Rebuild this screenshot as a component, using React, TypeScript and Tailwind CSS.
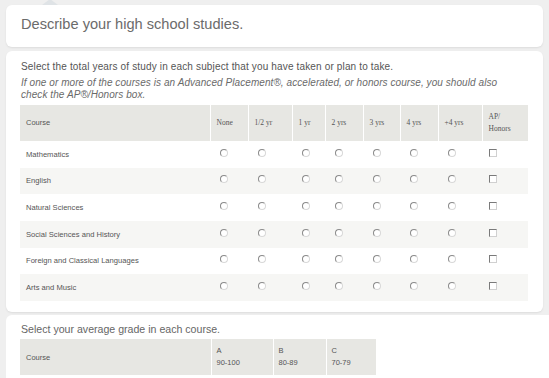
import React from "react";

const years = ["None", "1/2 yr", "1 yr", "2 yrs", "3 yrs", "4 yrs", "+4 yrs"];
const courses = [
  "Mathematics",
  "English",
  "Natural Sciences",
  "Social Sciences and History",
  "Foreign and Classical Languages",
  "Arts and Music",
];
const colWidths = ["w-[190px]", "w-[38px]", "w-[44px]", "w-[33px]", "w-[38px]", "w-[37px]", "w-[38px]", "w-[44px]", "w-[46px]"];

function Radio() {
  return (
    <span className="inline-block w-[8px] h-[8px] rounded-full border border-t-[#8a8a8a] border-l-[#8a8a8a] border-r-[#d8d8d8] border-b-[#d8d8d8] bg-white" />
  );
}

function Checkbox() {
  return (
    <span className="inline-block w-[8px] h-[8px] border border-t-[#7a7a7a] border-l-[#7a7a7a] border-r-[#d0d0d0] border-b-[#d0d0d0] bg-white" />
  );
}

export default function App() {
  return (
    <div className="w-[549px] h-[378px] overflow-hidden bg-[#efefef] font-['Liberation_Sans',sans-serif] text-[#666]">
      {/* intro panel */}
      <div className="relative mt-[5px] ml-[6px] mr-[6px] h-[42px] bg-white rounded-[6px] shadow-[0_1px_2px_rgba(0,0,0,0.08)] px-[15px] pt-[10px]">
        <span className="absolute -top-[6px] left-[36px] w-0 h-0 border-l-[8px] border-l-transparent border-r-[8px] border-r-transparent border-b-[6px] border-b-[#dfe3e6]" />
        <h1 className="text-[14.6px] leading-[18px] text-[#6b6b6b]">Describe your high school studies.</h1>
      </div>

      {/* years of study panel */}
      <div className="mt-[4px] ml-[6px] mr-[6px] bg-white rounded-[6px] shadow-[0_1px_2px_rgba(0,0,0,0.08)] pl-[14px] pr-[15px] pt-[9px] pb-[11px]">
        <p className="pl-[1px] text-[10px] leading-[14px] tracking-[0.15px] text-[#555] whitespace-nowrap">
          Select the total years of study in each subject that you have taken or plan to take.
        </p>
        <p className="pl-[1px] mt-[3px] text-[10px] leading-[12px] italic tracking-[0.07px] text-[#6a6a6a] whitespace-nowrap">
          If one or more of the courses is an Advanced Placement®, accelerated, or honors course, you should also
          <br />
          check the AP®/Honors box.
        </p>
        <table className="mt-[4px] table-fixed border-collapse w-[508px] text-[7.6px] text-[#555]">
          <colgroup>
            {colWidths.map((w, i) => (
              <col key={i} className={w} />
            ))}
          </colgroup>
          <thead>
            <tr className="h-[36px] bg-[#e7e7e3]">
              <th className="text-left font-normal pl-[6px] border-r border-white text-[7.5px]">Course</th>
              {years.map((y) => (
                <th key={y} className="text-left font-normal pl-[6px] border-r border-white font-['Liberation_Serif',serif] text-[7.5px]">
                  {y}
                </th>
              ))}
              <th className="text-left font-normal pl-[6px] leading-[12px] font-['Liberation_Serif',serif] text-[7.5px]">
                AP/
                <br />
                Honors
              </th>
            </tr>
          </thead>
          <tbody>
            {courses.map((c, i) => (
              <tr key={c} className={`h-[26.7px] ${i % 2 === 1 ? "bg-[#f6f6f4]" : "bg-white"}`}>
                <td className="pl-[6px]">{c}</td>
                {years.map((y) => (
                  <td key={y} className="pl-[10px]">
                    <Radio />
                  </td>
                ))}
                <td className="pl-[7px]">
                  <Checkbox />
                </td>
              </tr>
            ))}
          </tbody>
        </table>
      </div>

      {/* grade panel */}
      <div className="mt-[3px] ml-[6px] bg-white rounded-tl-[6px] pl-[14px] pt-[6px] h-[80px]">
        <p className="pl-[1px] text-[10.6px] leading-[16px] text-[#666]">Select your average grade in each course.</p>
        <table className="mt-[2px] table-fixed border-collapse w-[356px] text-[7.5px] text-[#555]">
          <colgroup>
            <col className="w-[191px]" />
            <col className="w-[62px]" />
            <col className="w-[53px]" />
            <col className="w-[50px]" />
          </colgroup>
          <thead>
            <tr className="h-[36px] bg-[#e7e7e3]">
              <th className="text-left font-normal pl-[6px] border-r border-white">Course</th>
              <th className="text-left font-normal pl-[5px] leading-[12px] border-r border-white">
                A<br />90-100
              </th>
              <th className="text-left font-normal pl-[5px] leading-[12px] border-r border-white">
                B<br />80-89
              </th>
              <th className="text-left font-normal pl-[5px] leading-[12px]">
                C<br />70-79
              </th>
            </tr>
          </thead>
        </table>
      </div>
    </div>
  );
}
